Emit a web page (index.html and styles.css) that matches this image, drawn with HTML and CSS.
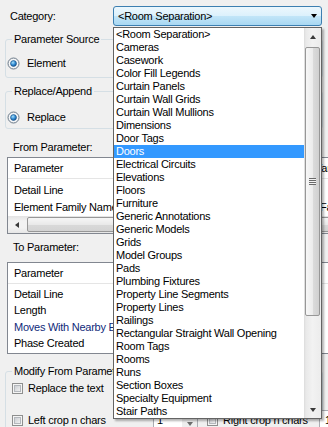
FILE: index.html
```html
<!DOCTYPE html>
<html>
<head>
<meta charset="utf-8">
<link rel="stylesheet" href="styles.css">
</head>
<body>
<div class="form">
  <div class="cat-row">
    <span class="cat-label">Category:</span>
    <div class="combo"><span class="combo-text">&lt;Room Separation&gt;</span><span class="arrow-down"></span></div>
  </div>

  <fieldset class="group g1">
    <legend>Parameter Source</legend>
    <div class="opt">
      <svg class="radio" width="13" height="13" viewBox="0 0 13 13">
        <defs>
          <radialGradient id="rg1" cx="0.4" cy="0.35" r="0.7">
            <stop offset="0" stop-color="#a9e0fb"/>
            <stop offset="0.55" stop-color="#2f8ad2"/>
            <stop offset="1" stop-color="#0f4f8f"/>
          </radialGradient>
        </defs>
        <circle cx="6.5" cy="6.5" r="5.5" fill="#eef0f2" stroke="#6c7a88"/>
        <circle cx="6.5" cy="6.5" r="4" fill="#ffffff"/>
        <circle cx="6.5" cy="6.5" r="3" fill="url(#rg1)" stroke="#1d4f7f" stroke-width="0.6"/>
      </svg>
      <span>Element</span>
    </div>
  </fieldset>

  <fieldset class="group g2">
    <legend>Replace/Append</legend>
    <div class="opt">
      <svg class="radio" width="13" height="13" viewBox="0 0 13 13">
        <defs>
          <radialGradient id="rg2" cx="0.4" cy="0.35" r="0.7">
            <stop offset="0" stop-color="#a9e0fb"/>
            <stop offset="0.55" stop-color="#2f8ad2"/>
            <stop offset="1" stop-color="#0f4f8f"/>
          </radialGradient>
        </defs>
        <circle cx="6.5" cy="6.5" r="5.5" fill="#eef0f2" stroke="#6c7a88"/>
        <circle cx="6.5" cy="6.5" r="4" fill="#ffffff"/>
        <circle cx="6.5" cy="6.5" r="3" fill="url(#rg2)" stroke="#1d4f7f" stroke-width="0.6"/>
      </svg>
      <span>Replace</span>
    </div>
  </fieldset>

  <div class="caption cap-from">From Parameter:</div>
  <div class="lv lv1">
    <div class="lv-head"><div class="col c1">Parameter</div><div class="col c2 h2">Variable</div></div>
    <div class="lv-body">
      <div class="lv-row"><div class="col c1">Detail Line</div><div class="col c2"></div></div>
      <div class="lv-row"><div class="col c1">Element Family Name</div><div class="col c2">Family</div></div>
    </div>
    <div class="hscroll">
      <div class="sb-btn"><span class="arrow-left"></span></div>
      <div class="hthumb"></div>
    </div>
  </div>

  <div class="caption cap-to">To Parameter:</div>
  <div class="lv lv2">
    <div class="lv-head"><div class="col c1">Parameter</div></div>
    <div class="lv-body">
      <div class="lv-row"><div class="col c1">Detail Line</div></div>
      <div class="lv-row"><div class="col c1">Length</div></div>
      <div class="lv-row"><div class="col c1 hot">Moves With Nearby Elements</div></div>
      <div class="lv-row"><div class="col c1">Phase Created</div></div>
    </div>
  </div>

  <fieldset class="group g3">
    <legend>Modify From Parameter</legend>
    <div class="chk-row">
      <svg class="chk" width="11" height="11" viewBox="0 0 11 11">
        <defs>
          <linearGradient id="cg1" x1="0" y1="0" x2="1" y2="1">
            <stop offset="0" stop-color="#c9ccd1"/>
            <stop offset="1" stop-color="#f3f3f3"/>
          </linearGradient>
        </defs>
        <rect x="0.5" y="0.5" width="10" height="10" fill="#f4f4f4" stroke="#8e8f8f"/>
        <rect x="2.5" y="2.5" width="6" height="6" fill="url(#cg1)" stroke="#b4b8bd"/>
      </svg>
      <span>Replace the text</span>
    </div>
    <div class="chk-row row2">
      <svg class="chk" width="11" height="11" viewBox="0 0 11 11">
        <defs>
          <linearGradient id="cg2" x1="0" y1="0" x2="1" y2="1">
            <stop offset="0" stop-color="#c9ccd1"/>
            <stop offset="1" stop-color="#f3f3f3"/>
          </linearGradient>
        </defs>
        <rect x="0.5" y="0.5" width="10" height="10" fill="#f4f4f4" stroke="#8e8f8f"/>
        <rect x="2.5" y="2.5" width="6" height="6" fill="url(#cg2)" stroke="#b4b8bd"/>
      </svg>
      <span class="lbl-left">Left crop n chars</span>
      <div class="num num1"><span class="num-val">1</span><span class="num-btns"><span class="arrow-down small"></span></span></div>
      <svg class="chk chk-right" width="11" height="11" viewBox="0 0 11 11">
        <defs>
          <linearGradient id="cg3" x1="0" y1="0" x2="1" y2="1">
            <stop offset="0" stop-color="#c9ccd1"/>
            <stop offset="1" stop-color="#f3f3f3"/>
          </linearGradient>
        </defs>
        <rect x="0.5" y="0.5" width="10" height="10" fill="#f4f4f4" stroke="#8e8f8f"/>
        <rect x="2.5" y="2.5" width="6" height="6" fill="url(#cg3)" stroke="#b4b8bd"/>
      </svg>
      <span class="lbl-right">Right crop n chars</span>
      <div class="num num2"><span class="num-val">1</span></div>
    </div>
  </fieldset>
</div>

<div class="popup">
  <div class="popup-list">
    <div class="item">&lt;Room Separation&gt;</div>
    <div class="item">Cameras</div>
    <div class="item">Casework</div>
    <div class="item">Color Fill Legends</div>
    <div class="item">Curtain Panels</div>
    <div class="item">Curtain Wall Grids</div>
    <div class="item">Curtain Wall Mullions</div>
    <div class="item">Dimensions</div>
    <div class="item">Door Tags</div>
    <div class="item sel">Doors</div>
    <div class="item">Electrical Circuits</div>
    <div class="item">Elevations</div>
    <div class="item">Floors</div>
    <div class="item">Furniture</div>
    <div class="item">Generic Annotations</div>
    <div class="item">Generic Models</div>
    <div class="item">Grids</div>
    <div class="item">Model Groups</div>
    <div class="item">Pads</div>
    <div class="item">Plumbing Fixtures</div>
    <div class="item">Property Line Segments</div>
    <div class="item">Property Lines</div>
    <div class="item">Railings</div>
    <div class="item">Rectangular Straight Wall Opening</div>
    <div class="item">Room Tags</div>
    <div class="item">Rooms</div>
    <div class="item">Runs</div>
    <div class="item">Section Boxes</div>
    <div class="item">Specialty Equipment</div>
    <div class="item">Stair Paths</div>
  </div>
  <div class="vscroll">
    <div class="vbtn"><span class="arrow-up"></span></div>
    <div class="vthumb"><span class="grip"></span></div>
    <div class="vtrack"></div>
    <div class="vbtn"><span class="arrow-down dark"></span></div>
  </div>
</div>
</body>
</html>
```

FILE: styles.css
```css
html, body {
  margin: 0;
  padding: 0;
  background: #f0f0f0;
  width: 328px;
  height: 427px;
  overflow: hidden;
}
body {
  position: relative;
  font-family: "Liberation Sans", Arial, sans-serif;
  font-size: 11px;
  letter-spacing: -0.25px;
  color: #000;
}
.form {
  padding-top: 6px;
  width: 340px;
}

/* category row */
.cat-row {
  display: flex;
  align-items: center;
  height: 20px;
}
.cat-label {
  width: 103px;
  padding-left: 10px;
  line-height: 13px;
}
.combo {
  width: 209px;
  height: 20px;
  box-sizing: border-box;
  border: 1px solid #3c7fb1;
  border-radius: 3px;
  background: linear-gradient(#ecf7fd 0%, #dcf1fc 48%, #c1e5f8 52%, #a9d8f2 100%);
  display: flex;
  align-items: center;
  padding-left: 4px;
}
.combo-text {
  flex: 1;
  line-height: 13px;
}
.arrow-down {
  width: 0;
  height: 0;
  border-left: 3.5px solid transparent;
  border-right: 3.5px solid transparent;
  border-top: 4px solid #000;
  margin-right: 4px;
}
.arrow-up {
  width: 0;
  height: 0;
  border-left: 3.5px solid transparent;
  border-right: 3.5px solid transparent;
  border-bottom: 4px solid #3a3a3a;
}
.arrow-left {
  width: 0;
  height: 0;
  border-top: 3.5px solid transparent;
  border-bottom: 3.5px solid transparent;
  border-right: 4px solid #3a3a3a;
}

/* group boxes */
.group {
  margin: 7px 0 0 5px;
  width: 318px;
  box-sizing: border-box;
  border: 1px solid #d5dfe5;
  border-radius: 3px;
  padding: 0;
  min-width: 0;
}
.group legend {
  padding: 0 2px;
  margin-left: 6px;
  line-height: 12px;
  height: 12px;
}
.g1 { padding: 12px 0 7px 0; }
.g2 { padding: 14px 0 4px 0; }
.opt {
  display: flex;
  align-items: center;
  height: 13px;
  line-height: 13px;
  padding-left: 1px;
}
.radio {
  display: block;
  margin-right: 7px;
}

/* captions */
.caption {
  line-height: 13px;
  padding-left: 13px;
}
.cap-from { margin-top: 12px; }
.cap-to { margin-top: 7px; }

/* list views */
.lv {
  margin-left: 7px;
  width: 340px;
  box-sizing: border-box;
  border: 1px solid #828790;
  background: #fff;
}
.lv1 { margin-top: 3px; }
.lv2 { margin-top: 8px; }
.lv-head {
  display: flex;
  height: 20px;
  border-bottom: 1px solid #e5e5e5;
  align-items: center;
  line-height: 13px;
}
.lv-body {
  padding-top: 3px;
}
.lv2 .lv-body { padding: 2px 0 1px 0; }
.lv-row {
  display: flex;
  height: 17px;
  align-items: center;
  line-height: 13px;
  white-space: nowrap;
}
.lv2 .lv-row { height: 16.5px; }
.col {
  white-space: nowrap;
  overflow: hidden;
  flex: none;
}
.c1 {
  width: 301px;
  padding-left: 6px;
}
.lv-head .c1 {
  border-right: 1px solid #e5e5e5;
  width: 300px;
  height: 20px;
  line-height: 20px;
}
.c2 { padding-left: 5px; }
.h2 { padding-left: 0; }
.hot { color: #102a7a; }

.hscroll {
  display: flex;
  height: 17px;
  background: linear-gradient(#e3e3e3, #f2f2f2 30%, #f2f2f2 70%, #e6e6e6);
}
.sb-btn {
  width: 17px;
  height: 17px;
  flex: none;
  display: flex;
  align-items: center;
  justify-content: center;
}
.hthumb {
  margin: 1px 0 1px 2px;
  width: 320px;
  flex: none;
  box-sizing: border-box;
  border: 1px solid #979797;
  border-radius: 2px;
  background: linear-gradient(#f6f6f6, #e9e9e9 50%, #d9d9d9 51%, #d3d3d3);
}

/* modify group */
.g3 {
  margin-top: 11px;
  padding: 5px 0 0 0;
  height: 80px;
}
.chk-row {
  display: flex;
  align-items: center;
  height: 13px;
  line-height: 13px;
  white-space: nowrap;
}
.chk-row > * { flex: none; }
.chk {
  display: block;
  margin-left: 6px;
  margin-right: 5px;
}
.row2 {
  margin-top: 15px;
  height: 20px;
}
.lbl-left { width: 125px; }
.num {
  height: 20px;
  box-sizing: border-box;
  border: 1px solid #abadb3;
  background: #fff;
  display: flex;
  align-items: center;
  padding-left: 3px;
}
.num1 { width: 45px; }
.num-val { flex: 1; }
.num-btns {
  width: 15px;
  height: 18px;
  display: flex;
  align-items: flex-end;
  justify-content: center;
  padding-bottom: 3px;
  box-sizing: border-box;
  background: #eeeeee;
}
.arrow-down.small {
  margin: 0;
  border-top-color: #6d6d6d;
}
.chk-right { margin-left: 9px; }
.lbl-right { width: 96px; }
.num2 { width: 40px; padding-left: 5px; }

/* dropdown popup */
.popup {
  position: absolute;
  left: 113px;
  top: 27px;
  width: 209px;
  height: 392px;
  box-sizing: border-box;
  border: 1px solid #646464;
  background: #fff;
  display: flex;
  box-shadow: 2px 2px 2px rgba(0, 0, 0, 0.3);
}
.popup-list {
  flex: 1;
  overflow: hidden;
}
.item {
  height: 13px;
  line-height: 13px;
  padding-left: 2px;
  white-space: nowrap;
}
.item.sel {
  background: #3399ff;
  color: #fff;
}
.vscroll {
  width: 17px;
  display: flex;
  flex-direction: column;
  background: linear-gradient(90deg, #dcdcdc 0, #e9e9e9 2px, #f2f2f2 50%, #ececec 100%);
}
.vbtn {
  height: 17px;
  flex: none;
  display: flex;
  align-items: center;
  justify-content: center;
}
.arrow-down.dark {
  margin: 0;
  border-top-color: #3a3a3a;
}
.vthumb {
  margin: 2px 1px 0 1px;
  height: 269px;
  flex: none;
  box-sizing: border-box;
  border: 1px solid #979797;
  border-radius: 2px;
  background: linear-gradient(90deg, #f7f7f7, #ececec 50%, #dcdcdc 51%, #d0d0d0);
  display: flex;
  align-items: center;
  justify-content: center;
}
.grip {
  width: 7px;
  height: 7px;
  background: repeating-linear-gradient(#6a6a6a 0, #6a6a6a 1px, #f3f3f3 1px, #f3f3f3 2px);
}
.vtrack { flex: 1; }
```
